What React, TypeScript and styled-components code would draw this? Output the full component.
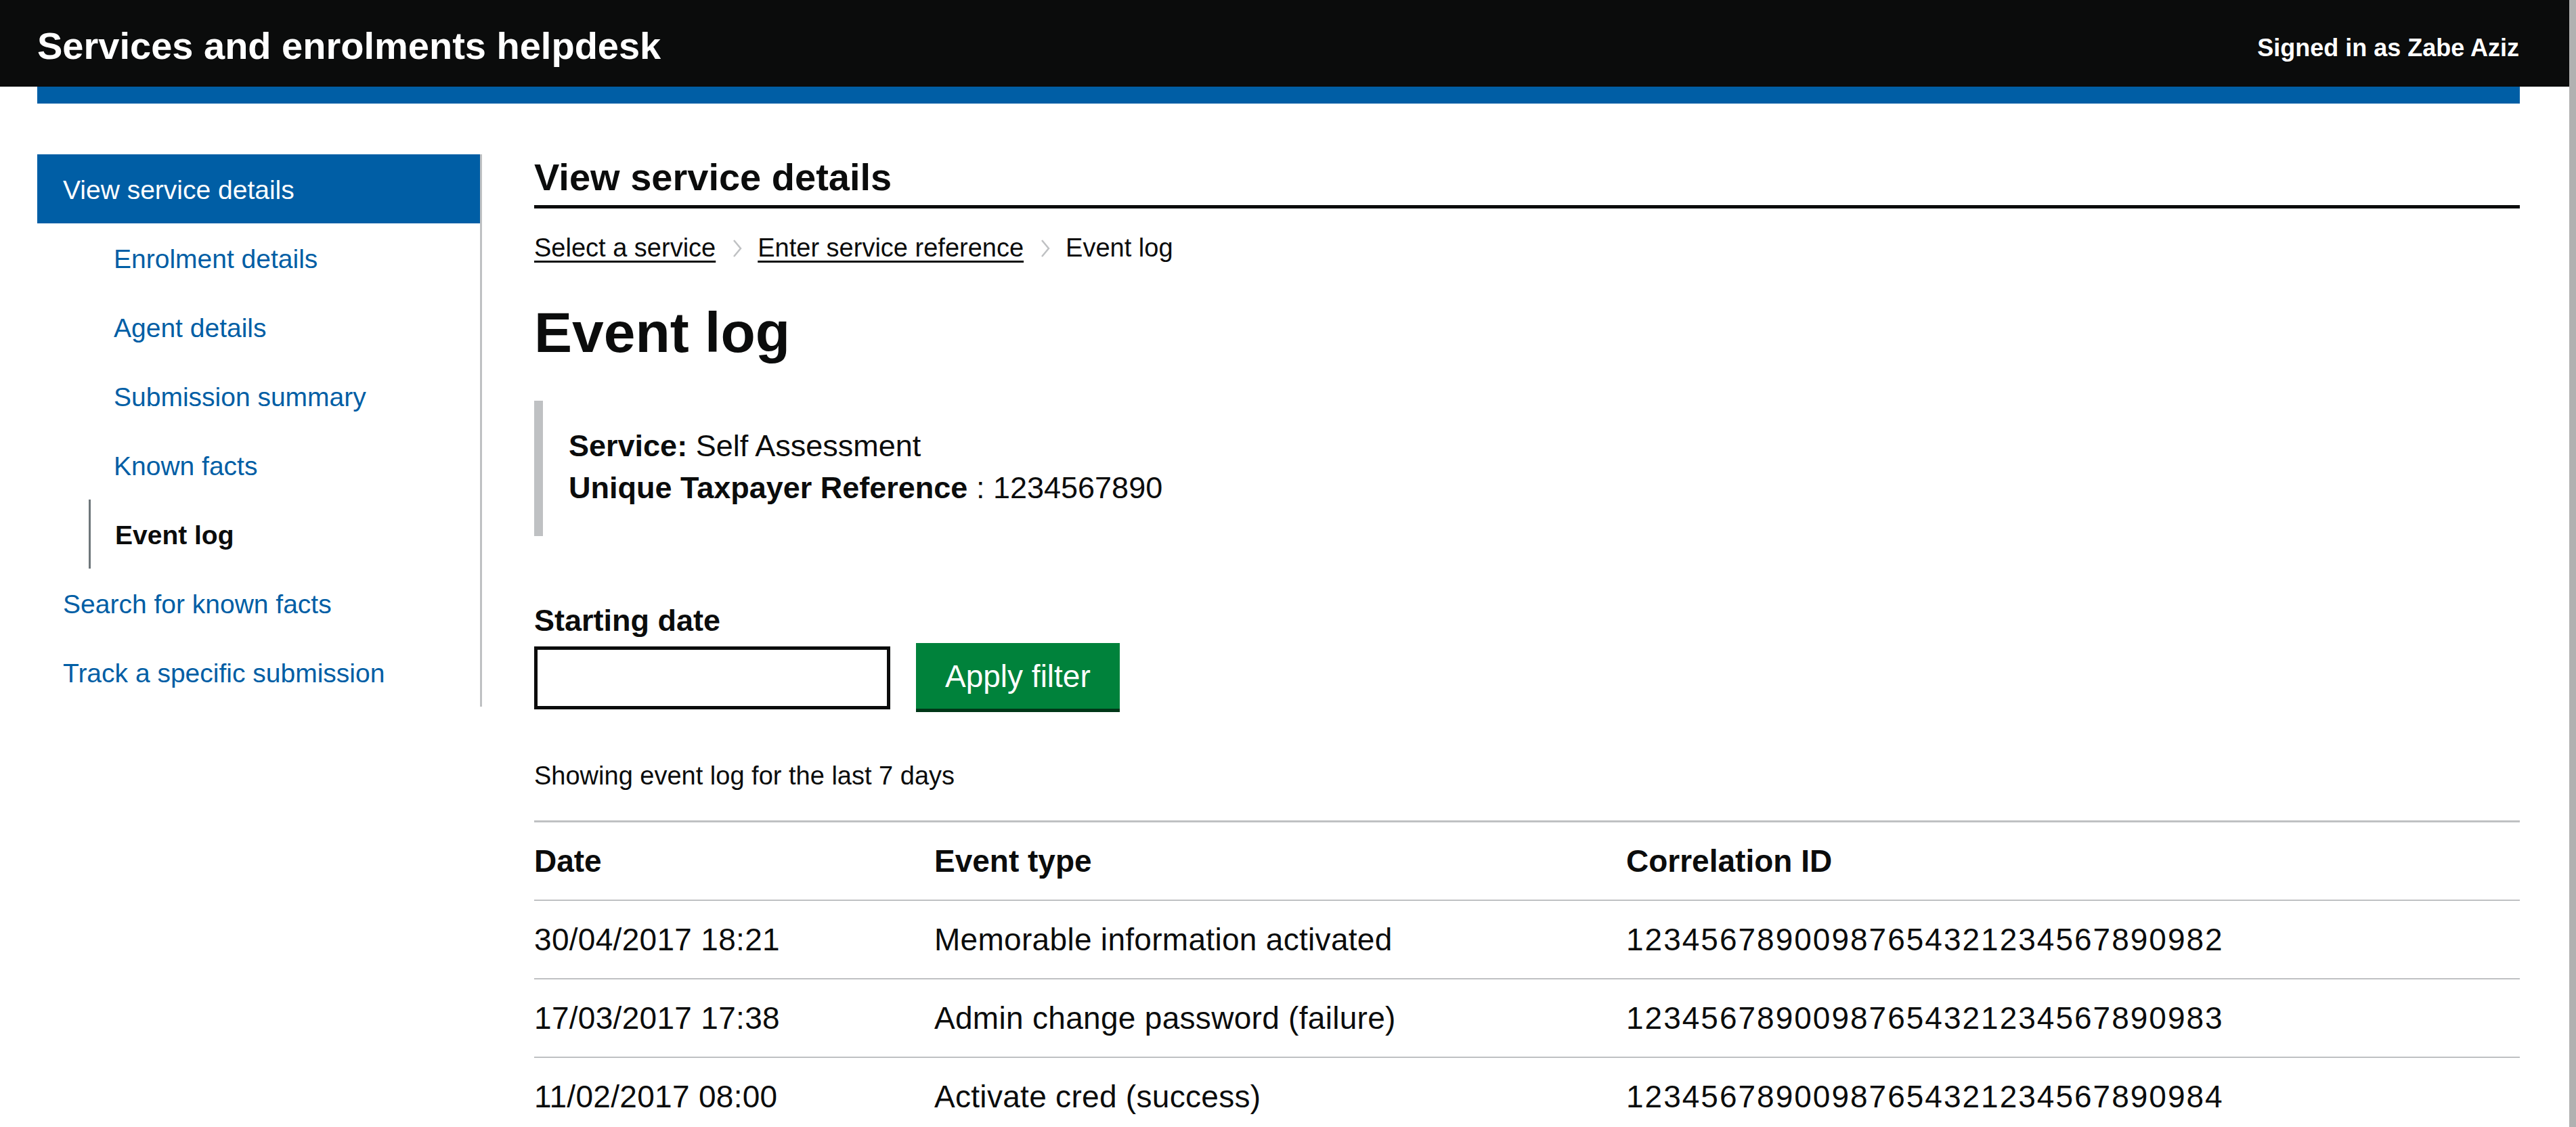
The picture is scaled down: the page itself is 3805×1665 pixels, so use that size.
import styled, { createGlobalStyle } from 'styled-components';

const GlobalStyle = createGlobalStyle`
  html, body {
    margin: 0;
    padding: 0;
    background: #ffffff;
    overflow: hidden;
  }
  body {
    font-family: "Liberation Sans", Arial, sans-serif;
    color: #0b0c0c;
  }
  * { box-sizing: border-box; }
`;

// fake browser scroll track on the right edge
const ScrollTrack = styled.div`
  position: fixed;
  top: 0;
  right: 0;
  width: 10px;
  height: 100vh;
  background: #b1b1b1;
  z-index: 10;
`;

const Header = styled.header`
  background: #0b0c0c;
  height: 128px;
  padding: 14px 84px 0 55px;
  display: flex;
  justify-content: space-between;
  align-items: center;
`;

const ServiceName = styled.div`
  color: #ffffff;
  font-size: 56px;
  font-weight: 700;
  margin-top: -8px;
`;

const SignedIn = styled.div`
  color: #ffffff;
  font-size: 36px;
  font-weight: 700;
`;

const Page = styled.div`
  padding: 0 83px 0 55px;
`;

const PhaseBar = styled.div`
  height: 25px;
  background: #005ea5;
`;

const Layout = styled.div`
  display: flex;
  align-items: flex-start;
  margin-top: 75px;
`;

const Sidebar = styled.nav`
  flex: none;
  width: 657px;
  border-right: 3px solid #bfc1c3;
`;

const NavItem = styled.div<{ $active?: boolean }>`
  height: 102px;
  display: flex;
  align-items: center;
  padding-left: 38px;
  padding-top: 3px;
  font-size: 39px;
  color: ${p => (p.$active ? '#ffffff' : '#005ea5')};
  background: ${p => (p.$active ? '#005ea5' : 'transparent')};
`;

const SubList = styled.div`
  margin-left: 76px;
`;

const SubItem = styled.div<{ $current?: boolean }>`
  height: 102px;
  display: flex;
  align-items: center;
  padding-left: ${p => (p.$current ? 36 : 34)}px;
  padding-top: 3px;
  border-left: 3px solid ${p => (p.$current ? '#6f777b' : 'transparent')};
  font-size: 39px;
  font-weight: ${p => (p.$current ? 700 : 400)};
  color: ${p => (p.$current ? '#0b0c0c' : '#005ea5')};
`;

const Main = styled.main`
  flex: 1;
  margin-left: 77px;
`;

const SectionTitle = styled.h2`
  margin: 0;
  font-size: 56px;
  line-height: 67px;
  font-weight: 700;
  padding-bottom: 8px;
  border-bottom: 5px solid #0b0c0c;
`;

const Breadcrumbs = styled.div`
  display: flex;
  align-items: center;
  margin-top: 34px;
  font-size: 38px;
  line-height: 49px;
`;

const Crumb = styled.a`
  color: #0b0c0c;
  text-decoration: underline;
  text-decoration-thickness: 3px;
  text-underline-offset: 6px;
`;

const Chevron = styled.svg`
  width: 14px;
  height: 26px;
  margin: 0 23px 0 25px;
  flex: none;
`;

const PageTitle = styled.h1`
  margin: 54px 0 0;
  font-size: 84px;
  line-height: 92px;
  font-weight: 700;
`;

const Inset = styled.div`
  margin-top: 55px;
  border-left: 13px solid #bfc1c3;
  padding: 36px 38px 40px;
  font-size: 45px;
  line-height: 62px;
`;

const FilterLabel = styled.label`
  display: block;
  margin-top: 96px;
  font-size: 45px;
  line-height: 58px;
  font-weight: 700;
`;

const FilterRow = styled.div`
  display: flex;
  align-items: center;
  gap: 38px;
  margin-top: 4px;
`;

const DateInput = styled.input`
  width: 526px;
  height: 93px;
  border: 5px solid #0b0c0c;
  font-family: inherit;
  font-size: 45px;
  padding: 0 12px;
  outline: none;
`;

const Button = styled.button`
  height: 97px;
  padding: 0 43px;
  background: #00823b;
  color: #ffffff;
  border: none;
  box-shadow: 0 5px 0 #003618;
  font-family: inherit;
  font-size: 46px;
  margin-bottom: 5px;
`;

const Summary = styled.p`
  margin: 70px 0 0;
  font-size: 38px;
  line-height: 49px;
`;

const Table = styled.table`
  width: 100%;
  margin-top: 41px;
  border-collapse: collapse;
  border-top: 3px solid #bfc1c3;
`;

const Th = styled.th<{ $width?: number }>`
  text-align: left;
  font-weight: 700;
  font-size: 46px;
  line-height: 58px;
  padding: 28px 0;
  border-bottom: 2px solid #bfc1c3;
  width: ${p => (p.$width ? `${p.$width}px` : 'auto')};
`;

const Td = styled.td<{ $mono?: boolean }>`
  font-size: 46px;
  line-height: 58px;
  padding: 28px 0;
  border-bottom: 2px solid #bfc1c3;
  letter-spacing: ${p => (p.$mono ? '2px' : '0.3px')};
`;

const events = [
  { date: '30/04/2017 18:21', type: 'Memorable information activated', id: '12345678900987654321234567890982' },
  { date: '17/03/2017 17:38', type: 'Admin change password (failure)', id: '12345678900987654321234567890983' },
  { date: '11/02/2017 08:00', type: 'Activate cred (success)', id: '12345678900987654321234567890984' },
];

function ChevronIcon() {
  return (
    <Chevron viewBox="0 0 14 26">
      <path d="M2 1 L12 13 L2 25" fill="none" stroke="#bfc1c3" strokeWidth="2.5" />
    </Chevron>
  );
}

function App() {
  return (
    <>
      <GlobalStyle />
      <ScrollTrack />
      <Header>
        <ServiceName>Services and enrolments helpdesk</ServiceName>
        <SignedIn>Signed in as Zabe Aziz</SignedIn>
      </Header>
      <Page>
        <PhaseBar />
        <Layout>
          <Sidebar>
            <NavItem $active>View service details</NavItem>
            <SubList>
              <SubItem>Enrolment details</SubItem>
              <SubItem>Agent details</SubItem>
              <SubItem>Submission summary</SubItem>
              <SubItem>Known facts</SubItem>
              <SubItem $current>Event log</SubItem>
            </SubList>
            <NavItem>Search for known facts</NavItem>
            <NavItem>Track a specific submission</NavItem>
          </Sidebar>

          <Main>
            <SectionTitle>View service details</SectionTitle>
            <Breadcrumbs>
              <Crumb>Select a service</Crumb>
              <ChevronIcon />
              <Crumb>Enter service reference</Crumb>
              <ChevronIcon />
              <span>Event log</span>
            </Breadcrumbs>

            <PageTitle>Event log</PageTitle>

            <Inset>
              <div><strong>Service:</strong> Self Assessment</div>
              <div><strong>Unique Taxpayer Reference</strong> : 1234567890</div>
            </Inset>

            <FilterLabel htmlFor="start-date">Starting date</FilterLabel>
            <FilterRow>
              <DateInput id="start-date" type="text" />
              <Button>Apply filter</Button>
            </FilterRow>

            <Summary>Showing event log for the last 7 days</Summary>

            <Table>
              <thead>
                <tr>
                  <Th $width={591}>Date</Th>
                  <Th $width={1022}>Event type</Th>
                  <Th>Correlation ID</Th>
                </tr>
              </thead>
              <tbody>
                {events.map(ev => (
                  <tr key={ev.id}>
                    <Td>{ev.date}</Td>
                    <Td>{ev.type}</Td>
                    <Td $mono>{ev.id}</Td>
                  </tr>
                ))}
              </tbody>
            </Table>
          </Main>
        </Layout>
      </Page>
    </>
  );
}

export default App;
